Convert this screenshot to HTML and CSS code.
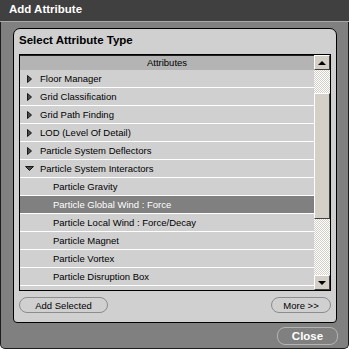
FILE: index.html
```html
<!DOCTYPE html>
<html lang="en">
<head>
    <meta charset="UTF-8">
    <meta name="viewport" content="width=device-width, initial-scale=1.0">
    <title>Add Attribute</title>
    <link rel="stylesheet" href="styles.css">
</head>
<body>
    <div class="window">
        <div class="titlebar">Add Attribute</div>

        <div class="panel">
            <h2 class="panel-title">Select Attribute Type</h2>

            <div class="list">
                <div class="list-main">
                    <div class="list-header">Attributes</div>
                    <ul class="rows">
                        <li class="row"><svg class="tri" width="5" height="8"><polygon points="0.5,0.5 4.5,4 0.5,7.5" /></svg>Floor Manager</li>
                        <li class="row"><svg class="tri" width="5" height="8"><polygon points="0.5,0.5 4.5,4 0.5,7.5" /></svg>Grid Classification</li>
                        <li class="row"><svg class="tri" width="5" height="8"><polygon points="0.5,0.5 4.5,4 0.5,7.5" /></svg>Grid Path Finding</li>
                        <li class="row"><svg class="tri" width="5" height="8"><polygon points="0.5,0.5 4.5,4 0.5,7.5" /></svg>LOD (Level Of Detail)</li>
                        <li class="row"><svg class="tri" width="5" height="8"><polygon points="0.5,0.5 4.5,4 0.5,7.5" /></svg>Particle System Deflectors</li>
                        <li class="row"><svg class="tri tri-open" width="9" height="5"><polygon points="0.5,0.5 8.5,0.5 4.5,4.5" /></svg>Particle System Interactors</li>
                        <li class="row child">Particle Gravity</li>
                        <li class="row child selected">Particle Global Wind : Force</li>
                        <li class="row child">Particle Local Wind : Force/Decay</li>
                        <li class="row child">Particle Magnet</li>
                        <li class="row child">Particle Vortex</li>
                        <li class="row child">Particle Disruption Box</li>
                        <li class="row child"></li>
                    </ul>
                </div>
                <div class="scrollbar">
                    <div class="sb-btn"><span class="arrow-up"></span></div>
                    <div class="sb-track"><div class="sb-thumb"></div></div>
                    <div class="sb-btn"><span class="arrow-down"></span></div>
                </div>
            </div>

            <div class="actions">
                <button class="pill add-btn">Add Selected</button>
                <button class="pill more-btn">More &gt;&gt;</button>
            </div>
        </div>

        <div class="footer">
            <button class="close-btn">Close</button>
        </div>
    </div>
</body>
</html>
```

FILE: styles.css
```css
body {
    margin: 0;
    font-family: "Liberation Sans", Arial, sans-serif;
    background-color: #ffffff;
}
.window {
    width: 349px;
    height: 349px;
    box-sizing: border-box;
    background-color: #808080;
    border: 1px solid #1c1c1c;
    border-top: none;
    border-radius: 0 0 5px 5px;
    display: flex;
    flex-direction: column;
}
.titlebar {
    height: 21px;
    line-height: 18px;
    margin: 0 -1px;
    padding-left: 9px;
    background-color: #404040;
    border-bottom: 1px solid #a8a8a8;
    color: #ffffff;
    font-size: 11.5px;
    font-weight: bold;
}
.panel {
    width: 324px;
    height: 295px;
    box-sizing: border-box;
    margin: 6px 0 0 12px;
    padding: 0 5px;
    background-color: #d0d0d0;
    border: 1px solid #000000;
    border-radius: 7px 7px 4px 4px;
}
.panel-title {
    margin: 4px 0 7px;
    font-size: 11.5px;
    line-height: 14px;
    font-weight: bold;
    color: #000000;
}
.list {
    display: flex;
    height: 237px;
    box-sizing: border-box;
    border: 1px solid #000000;
    background-color: #d0d0d0;
}
.list-main {
    width: 294px;
    overflow: hidden;
}
.list-header {
    height: 14px;
    line-height: 14px;
    border-top: 1px solid #202020;
    background-color: #b4b4b4;
    text-align: center;
    font-size: 9.5px;
    color: #000000;
}
.rows {
    list-style: none;
    margin: 0;
    padding: 0;
}
.row {
    display: flex;
    align-items: center;
    height: 17px;
    border-bottom: 1px solid #ffffff;
    font-size: 9.5px;
    color: #000000;
    white-space: nowrap;
}
.tri {
    margin: 0 8px 0 7px;
    fill: #4a4a4a;
    stroke: #1a1a1a;
    stroke-width: 1;
}
.tri-open {
    margin: 0 6px 0 5px;
}
.child {
    padding-left: 33px;
}
.selected {
    background-color: #808080;
    color: #ffffff;
}
.scrollbar {
    width: 16px;
    display: flex;
    flex-direction: column;
}
.sb-btn {
    height: 15px;
    box-sizing: border-box;
    background-color: #d4d0c8;
    border: 1px solid;
    border-color: #ffffff #404040 #404040 #ffffff;
    display: flex;
    justify-content: center;
    align-items: center;
}
.arrow-up {
    border-left: 4px solid transparent;
    border-right: 4px solid transparent;
    border-bottom: 4px solid #000000;
}
.arrow-down {
    border-left: 4px solid transparent;
    border-right: 4px solid transparent;
    border-top: 4px solid #000000;
}
.sb-track {
    flex: 1;
    padding-top: 23px;
    background-color: #d4d0c8;
    background-image: conic-gradient(#ffffff 25%, #d4d0c8 0 50%, #ffffff 0 75%, #d4d0c8 0);
    background-size: 2px 2px;
}
.sb-thumb {
    height: 126px;
    box-sizing: border-box;
    background-color: #d4d0c8;
    border: 1px solid;
    border-color: #ffffff #404040 #404040 #ffffff;
}
.actions {
    display: flex;
    justify-content: space-between;
    margin-top: 6px;
}
.pill {
    height: 16px;
    padding: 0;
    background: transparent;
    border: 1px solid #8c8c8c;
    border-radius: 8px;
    font-family: "Liberation Sans", Arial, sans-serif;
    font-size: 9.5px;
    color: #000000;
}
.add-btn {
    width: 89px;
}
.more-btn {
    width: 60px;
}
.footer {
    display: flex;
    justify-content: flex-end;
    padding: 4px 10px 0;
}
.close-btn {
    width: 61px;
    height: 18px;
    padding: 0;
    background: transparent;
    border: 1px solid #b4b4b4;
    border-radius: 8px;
    font-family: "Liberation Sans", Arial, sans-serif;
    font-size: 11.5px;
    font-weight: bold;
    color: #ffffff;
}
```
